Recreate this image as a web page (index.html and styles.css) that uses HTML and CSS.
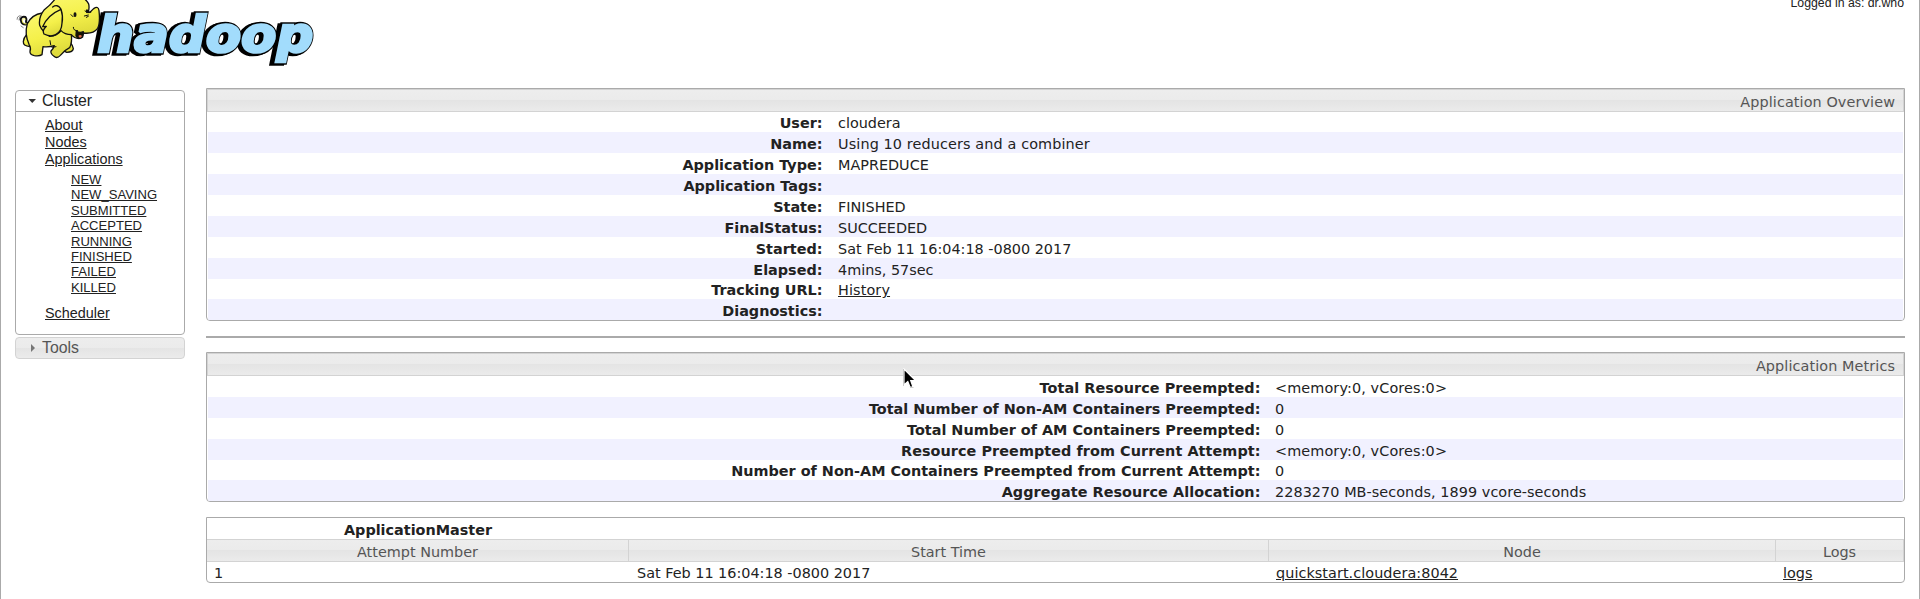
FILE: index.html
```html
<!DOCTYPE html>
<html lang="en">
<head>
<meta charset="utf-8">
<title>Application Overview</title>
<link rel="stylesheet" href="styles.css">
</head>
<body>
<div class="page">
  <header class="top">
    <svg class="logo" width="330" height="70" viewBox="0 0 990 210">
      <defs><linearGradient id="hide" x1="0" y1="0" x2=".3" y2="1"><stop offset="0" stop-color="#fbf870"/><stop offset=".6" stop-color="#f4f04a"/><stop offset="1" stop-color="#dfdb3c"/></linearGradient></defs>
      <g class="wordmark">
        <text class="wordmark-edge" x="282" y="158" textLength="648" lengthAdjust="spacingAndGlyphs">hadoop</text>
        <text class="wordmark-edge" x="290" y="157" textLength="648" lengthAdjust="spacingAndGlyphs">hadoop</text>
        <text class="wordmark-face" x="292" y="155" textLength="648" lengthAdjust="spacingAndGlyphs">hadoop</text>
      </g>
      <g transform="translate(9 1)" stroke="#111" stroke-width="4" stroke-linejoin="round" stroke-linecap="round" fill="url(#hide)">
        <path d="M70 104 Q62 112 61 124 Q60 137 81 139 L97 110Z"/>
        <path d="M187 115 Q206 124 211 145 Q210 156 191 156 Q176 150 174 132Z"/>
        <path d="M72 72 Q55 75 53 58 Q55 47 67 50 Q72 55 69 65 L77 70" fill="none" stroke-width="6"/>
        <path d="M72 71 Q57 72 58 60 Q60 52 67 56" fill="none" stroke="#f2ee43" stroke-width="2.5"/>
        <path d="M118 38 Q86 43 73 70 Q64 101 78 132 Q85 143 81 153 Q80 163 94 166 Q110 168 117 163 L120 139 Q138 141 154 136 Q152 144 144 152 Q142 160 153 168 Q162 176 172 165 Q185 149 200 142 Q208 125 205 103 L174 60Z"/>
        <path d="M157 -5 Q146 11 124 28 Q106 51 110 75 Q117 93 140 108 Q163 107 174 91 Q185 103 205 103 Q214 114 228 115 Q241 111 241 98 Q270 102 284 84 Q292 68 288 31 Q286 15 272 25 Q265 34 255 37 Q260 24 257 11 Q248 -8 220 -15Z"/>
        <path d="M119 79 Q135 43 174 27 Q181 48 177 68 Q176 94 158 103 Q143 111 123 101 Q116 91 130 78Z"/>
        <path d="M149 20 Q163 10 173 25" fill="none"/>
        <path d="M220 92 Q230 99 241 94 L239 110 Q225 120 219 106Z" fill="#171300"/>
        <path d="M226 107 Q233 101 237 108 L231 113Z" fill="#df6d50" stroke="none"/>
        <path d="M211 81 Q211 92 224 91 M246 32 Q259 40 264 36 M244 47 L256 44 M250 51 L256 48 M204 43 L210 49 M147 141 L159 139 M141 121 L143 133" fill="none" stroke-width="3"/>
        <ellipse cx="216" cy="43" rx="2.500" ry="5" fill="#111"/>
        <ellipse cx="252" cy="33" rx="1.500" ry="4" fill="#111"/>
        <path d="M42 57 Q41 49 49 46 M48 59 Q48 52 53 46 M54 77 L61 82" fill="none" stroke-width="1.5"/>
      </g>
    </svg>
    <div class="user">Logged in as: dr.who</div>
  </header>
  <div class="body">
    <nav class="nav">
      <div class="cluster">
        <div class="nav-head"><svg width="8" height="8"><path d="M.500 2H8L4.250 6Z" fill="#333"/></svg>Cluster</div>
        <ul class="links">
          <li><a>About</a></li><li><a>Nodes</a></li><li><a>Applications</a>
            <ul class="states"><li><a>NEW</a></li><li><a>NEW_SAVING</a></li><li><a>SUBMITTED</a></li><li><a>ACCEPTED</a></li><li><a>RUNNING</a></li><li><a>FINISHED</a></li><li><a>FAILED</a></li><li><a>KILLED</a></li></ul>
          </li>
          <li><a>Scheduler</a></li>
        </ul>
      </div>
      <div class="tools"><svg width="8" height="8"><path d="M3 0V8L7 4Z" fill="#777"/></svg>Tools</div>
    </nav>
    <main class="content">
      <section class="panel overview">
        <h2 class="head">Application Overview</h2>
        <div class="row short"><b>User:</b><span>cloudera</span></div>
        <div class="row"><b>Name:</b><span class="wide">Using 10 reducers and a combiner</span></div>
        <div class="row"><b>Application Type:</b><span>MAPREDUCE</span></div>
        <div class="row"><b>Application Tags:</b><span></span></div>
        <div class="row"><b>State:</b><span>FINISHED</span></div>
        <div class="row"><b>FinalStatus:</b><span>SUCCEEDED</span></div>
        <div class="row"><b>Started:</b><span>Sat Feb 11 16:04:18 -0800 2017</span></div>
        <div class="row"><b>Elapsed:</b><span>4mins, 57sec</span></div>
        <div class="row short"><b>Tracking URL:</b><span class="wide"><a>History</a></span></div>
        <div class="row"><b>Diagnostics:</b><span></span></div>
      </section>
      <div class="rule"></div>
      <section class="panel metrics">
        <h2 class="head">Application Metrics</h2>
        <div class="row"><b class="loose">Total Resource Preempted:</b><span class="wide">&lt;memory:0, vCores:0&gt;</span></div>
        <div class="row"><b>Total Number of Non-AM Containers Preempted:</b><span>0</span></div>
        <div class="row"><b>Total Number of AM Containers Preempted:</b><span>0</span></div>
        <div class="row"><b class="loose">Resource Preempted from Current Attempt:</b><span class="wide">&lt;memory:0, vCores:0&gt;</span></div>
        <div class="row short"><b>Number of Non-AM Containers Preempted from Current Attempt:</b><span>0</span></div>
        <div class="row"><b class="loose">Aggregate Resource Allocation:</b><span class="loose">2283270 MB-seconds, 1899 vcore-seconds</span></div>
      </section>
      <section class="panel attempts">
        <div class="cols title"><b>ApplicationMaster</b></div>
        <div class="cols labels"><span>Attempt Number</span><span>Start Time</span><span>Node</span><span>Logs</span></div>
        <div class="cols data"><span>1</span><span>Sat Feb 11 16:04:18 -0800 2017</span><span><a class="loose">quickstart.cloudera:8042</a></span><span><a>logs</a></span></div>
      </section>
    </main>
  </div>
  <svg class="pointer" width="14" height="22" viewBox="0 0 14 22"><path d="M1 1V17L4.800 13.500L7 19H10L7.700 12.500H12.500Z" fill="#000" stroke="#fff" stroke-width="1.2"/><path d="M.5 1V18M7 19.500H10.500" stroke="#aaa" stroke-width=".6" fill="none"/></svg>
</div>
</body>
</html>
```
FILE: styles.css
```css
* { box-sizing: border-box; }
body { margin: 0; background: #fff; color: #222; font: 14.4px "DejaVu Sans", sans-serif; overflow: hidden; }
.page { position: relative; height: 599px; border: solid #aaa; border-width: 0 1px; }
a { text-decoration: underline; }
.top { display: flex; justify-content: space-between; height: 88px; padding: 0 15px 0 0; }
.logo { display: block; margin-left: -1px; }
.wordmark { font: italic bold 150px "DejaVu Sans", sans-serif; }
.wordmark-edge { fill: #000; stroke: #000; stroke-width: 17px; stroke-linejoin: miter; stroke-miterlimit: 2; }
.wordmark-face { fill: #a2dcfc; stroke: #a2dcfc; stroke-width: 8px; stroke-linejoin: miter; stroke-miterlimit: 2; }
.user { margin-top: -4px; font: 12.3px/15px "Liberation Sans", sans-serif; }
.body { display: flex; gap: 21px; padding: 0 14px; }
.nav { width: 170px; padding-top: 2px; font-family: "Liberation Sans", sans-serif; }
.cluster { height: 245px; border: 1px solid #aaa; border-radius: 4px; }
.nav-head, .tools { display: flex; align-items: center; gap: 6px; padding-left: 12px; font-size: 15.84px; line-height: 20px; }
.nav-head { height: 21px; border-bottom: 1px solid #aaa; }
.nav-head svg, .tools svg { flex: none; }
.links, .states { list-style: none; margin: 0; padding: 0; }
.links { padding: 5px 0 0 29px; font-size: 14.4px; line-height: 17px; }
.states { padding: 4px 0 10px 26px; font-size: 13.05px; line-height: 15.4px; }
.tools { height: 22px; margin-top: 2px; border: 1px solid #d3d3d3; border-radius: 4px; color: #555; }
.head, .tools, .labels { background: linear-gradient(#ededed 0, #ebebeb 50%, #e4e4e4 50%, #ebebeb 100%); }
.content { flex: none; width: 1699px; }
.panel { border: 1px solid #aaa; border-radius: 0 0 4px 4px; overflow: hidden; }
.head { height: 23px; margin: 0; padding-right: 8px; border: 1px solid #d3d3d3; color: #555; font-size: 14.4px; font-weight: normal; line-height: 25px; text-align: right; letter-spacing: .1px; }
.row { display: grid; height: 21px; line-height: 24px; column-gap: 15.5px; margin: 0 1px; }
.short { height: 20px; line-height: 23px; }
.row:nth-child(odd) { background: #f1f1ff; }
.row b { text-align: right; }
.wide { letter-spacing: .12px; }
.loose { letter-spacing: .06px; }
.overview .row { grid-template-columns: 614.5px 1fr; }
.metrics .row { grid-template-columns: 1052.5px 1fr; column-gap: 14.5px; }
.rule { height: 2px; margin: 15px 0 14px; background: #aaa; }
.attempts { margin-top: 15px; }
.cols { display: grid; grid-template-columns: 422px 640px 507px 1fr; }
.title { height: 21px; line-height: 24px; text-align: center; }
.labels { height: 23px; border: solid #d3d3d3; border-width: 1px 0; color: #555; line-height: 24px; text-align: center; }
.labels span { height: 21px; border-right: 1px solid #d3d3d3; }
.data { height: 20px; line-height: 22px; }
.data span { padding-left: 7px; }
.data span:nth-child(2) { padding-left: 8px; }
.pointer { position: absolute; left: 902px; top: 368px; }
```
